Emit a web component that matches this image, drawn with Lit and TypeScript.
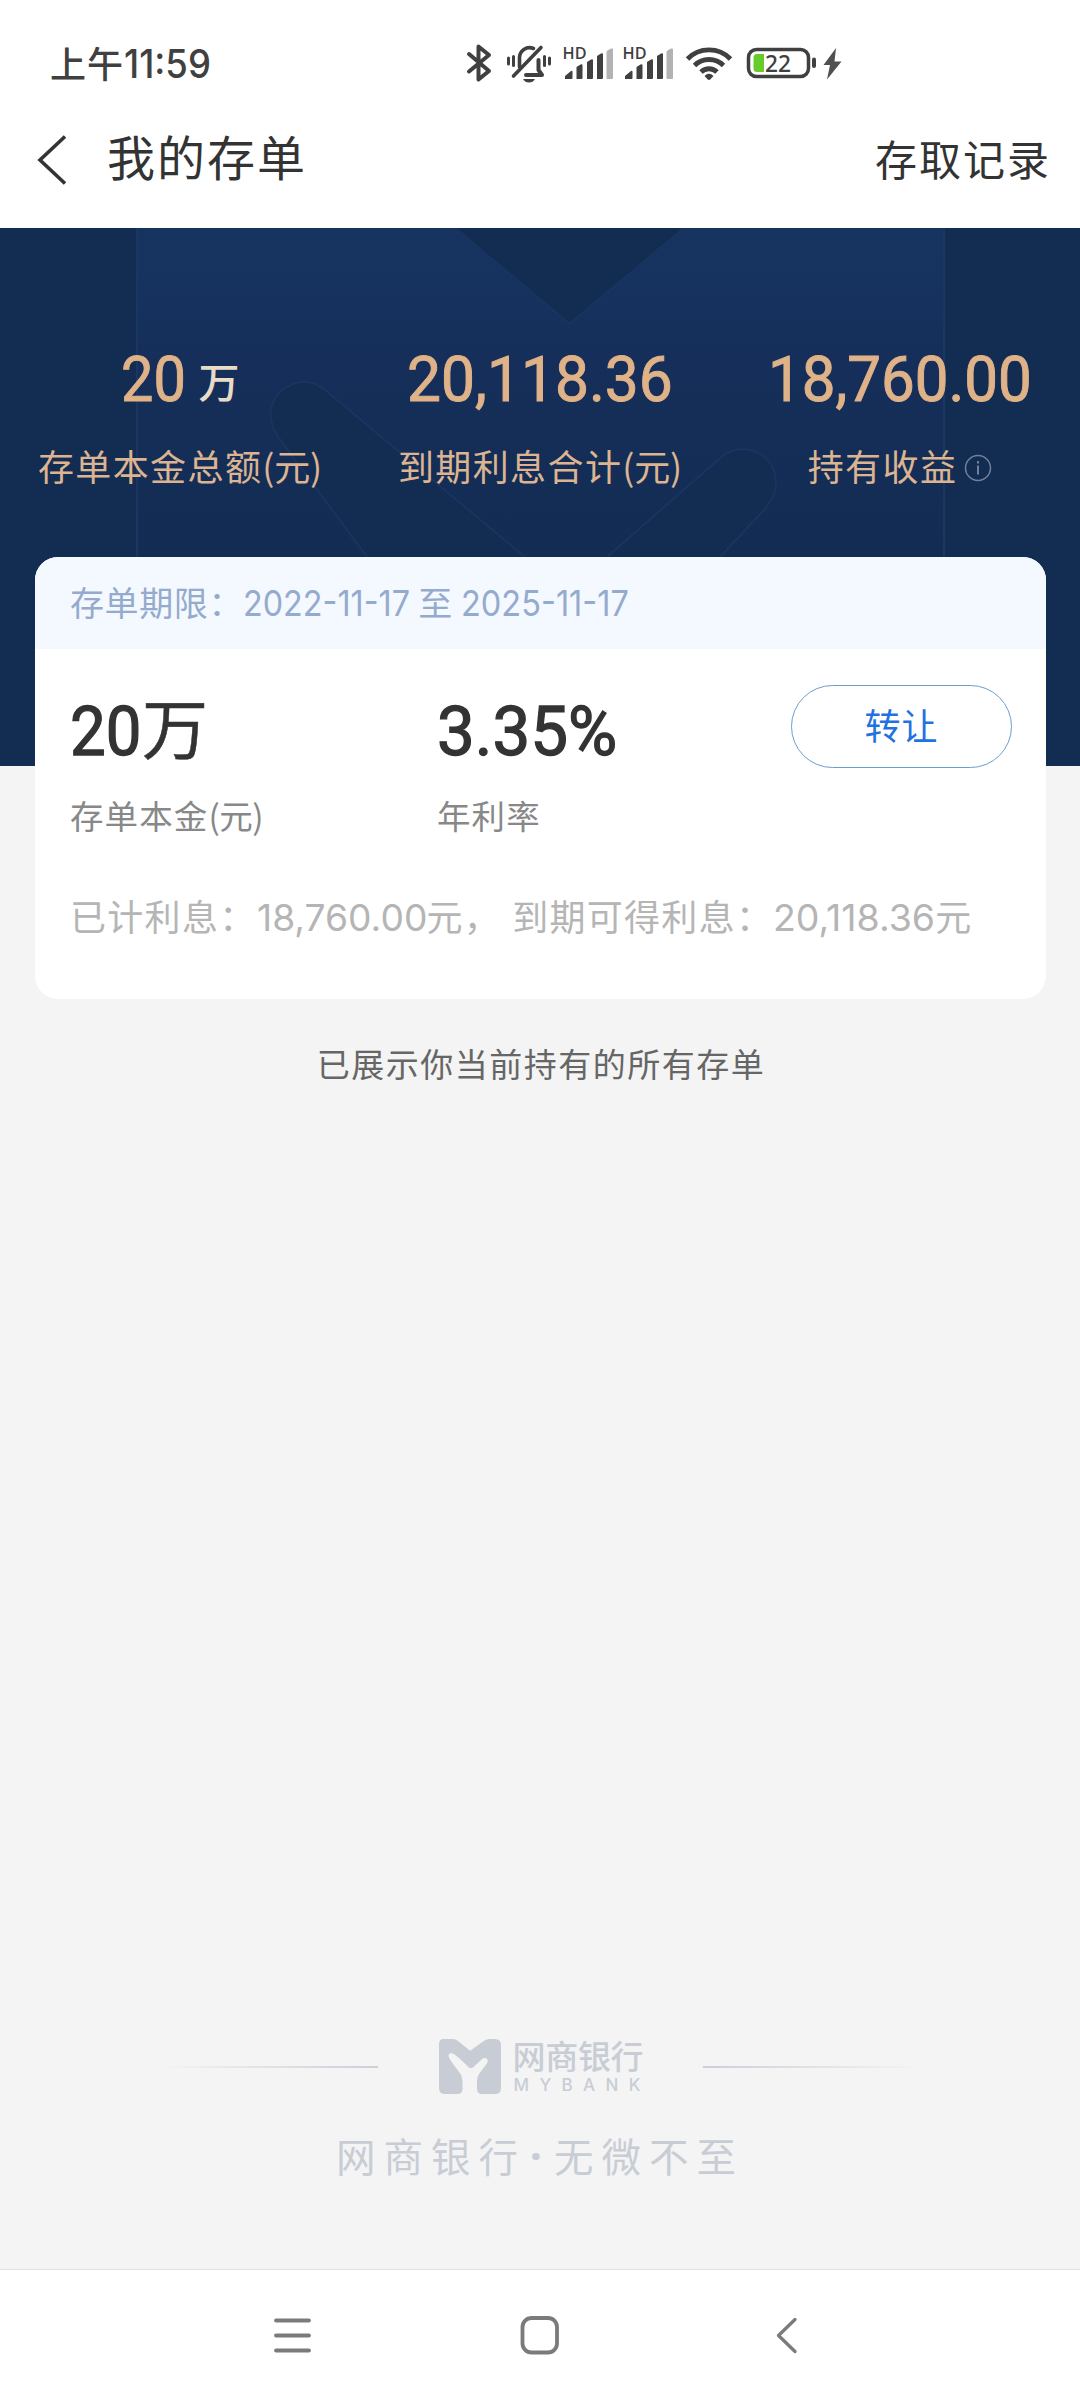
import { LitElement, html, css } from "lit";
import { customElement, property } from "lit/decorators.js";

/** A run of latin text, squeezed or stretched horizontally to a given width. */
@customElement("fit-text")
class FitText extends LitElement {
  static styles = css`
    :host { display: inline-block; line-height: 1; white-space: nowrap; letter-spacing: 0; }
    .run { display: inline-block; transform-origin: 0 50%; }
  `;
  @property({ type: Number }) w = 0;
  @property() text = "";
  render() {
    return html`<span class="run">${this.text}</span>`;
  }
  updated() {
    const run = this.renderRoot.querySelector(".run") as HTMLElement;
    this.style.width = `${this.w}px`;
    run.style.marginRight = `${this.w - run.offsetWidth}px`;
    run.style.transform = `scaleX(${this.w / run.offsetWidth})`;
  }
}

@customElement("status-bar")
class StatusBar extends LitElement {
  static styles = css`
    :host { display: flex; align-items: center; height: 90px; box-sizing: border-box; padding: 36px 0 0 50px; color: #404040; }
    .time { width: 410px; margin-top: -3px; font-size: 36px; line-height: 50px; letter-spacing: 1px; font-weight: 500; white-space: nowrap; }
    .digits { font: 500 39px Inter, sans-serif; }
    svg { display: block; flex: none; }
    .hd { font: 600 15.5px "Open Sans", sans-serif; }
    .level { font: 500 23px "Noto Sans", sans-serif; }
  `;
  private signal() {
    return html`<svg width="60" height="48" viewBox="560 40 60 48">
      <text class="hd" x="562.5" y="60" textLength="24" lengthAdjust="spacingAndGlyphs" fill="#404040">HD</text>
      <path fill="#404040" d="M565 80v-3l6-5q1.500-1 1.500 1v6q0 1-1 1zM576.500 80v-12l4-2.500q2-1 2 1v12.500q0 1-1 1zM587 80V63l4-2.500q2-1 2 1V79q0 1-1 1zM597 80V57l4-2.500q2-1 2 1V79q0 1-1 1z"/>
      <path fill="#b3b3b3" d="M606.500 79V53q0-1 1-1.500l3.500-2q2-.5 2 1V79q0 1-1 1h-4.500q-1 0-1-1z"/>
    </svg>`;
  }
  render() {
    return html`
      <div class="time">上午<fit-text class="digits" text="11:59" w="87"></fit-text></div>
      <svg width="40" height="48" viewBox="460 40 40 48" fill="none" stroke="#404040" stroke-width="4" stroke-linecap="round" stroke-linejoin="round">
        <path d="M469 55l20 17-10.500 8.500v-33L489 56l-20 16.500"/>
      </svg>
      <svg width="60" height="48" viewBox="500 40 60 48" fill="none" stroke="#404040" stroke-width="3.600" stroke-linecap="round" stroke-linejoin="round">
        <path d="M519.500 68V59a10 10 0 0 1 14-9.500M513.500 77L541 48.500" />
        <path stroke-width="4" d="M526 76h16l-3.500-5V61"/>
        <path stroke-width="3" d="M508.500 59v6M513.500 57.500v9M544.500 57.500v9M549.500 59v6"/>
        <path fill="#404040" stroke="none" d="M523 80h12q-2 3.500-6 3.500t-6-3.500z"/>
      </svg>
      ${this.signal()}${this.signal()}
      <svg width="60" height="48" viewBox="680 40 60 48" fill="none" stroke="#404040" stroke-width="4.800">
        <path d="M687.500 60a30 30 0 0 1 43 0M694.500 66.500a20.500 20.500 0 0 1 29 0M701 73a11.500 11.500 0 0 1 16 0"/>
        <path fill="#404040" stroke="none" d="M704.500 77q4.500-4.500 9 0l-3 3.300q-1.500 1.400-3 0z"/>
      </svg>
      <svg width="110" height="48" viewBox="740 40 110 48">
        <rect x="748.500" y="50.500" width="60" height="27" rx="8" fill="none" stroke="#404040" stroke-width="3.500"/>
        <rect x="812" y="58.500" width="4" height="10.500" rx="2" fill="#404040"/>
        <path fill="#67cb2c" d="M757 55h7v18h-7q-3.500 0-3.500-3.500v-11q0-3.500 3.500-3.500z"/>
        <text class="level" x="765" y="73" textLength="26" lengthAdjust="spacingAndGlyphs" fill="#404040">22</text>
        <path fill="#505050" d="M836 49l-12.500 17h6.500l-3 14.500 14.500-18h-7z"/>
      </svg>
    `;
  }
}

@customElement("title-bar")
class TitleBar extends LitElement {
  static styles = css`
    :host { display: flex; align-items: center; height: 138px; box-sizing: border-box; padding: 0 29px 0 36px; color: #333; }
    svg { display: block; margin-top: 2px; }
    .title { flex: 1; margin: -9px 0 0 39px; font-size: 48px; letter-spacing: 2px; }
    .link { font-size: 42px; letter-spacing: 2px; margin-top: -3px; }
  `;
  render() {
    return html`
      <svg width="32" height="52" viewBox="36 134 32 52" fill="none" stroke="#333" stroke-width="3.600"><path d="M65 136.500L40 160l25 23.500"/></svg>
      <div class="title">我的存单</div>
      <div class="link">存取记录</div>
    `;
  }
}

@customElement("summary-banner")
class SummaryBanner extends LitElement {
  static styles = css`
    :host { display: block; position: relative; height: 538px; background: #132c52; }
    .art { position: absolute; left: 0; top: 0; }
    .cols { position: relative; display: grid; grid-template-columns: 360px 360px 360px; padding-top: 115px; text-align: center; color: #dfb288; }
    .num { height: 70px; line-height: 70px; white-space: nowrap; }
    .din { font: 400 63px Roboto, sans-serif; -webkit-text-stroke: 1px currentColor; }
    .unit { position: relative; top: -3px; font-size: 41px; color: #e8dbc8; margin-left: 13px; font-weight: 500; }
    .label { display: flex; justify-content: center; align-items: center; height: 54px; margin-top: 25px; font-size: 36px; letter-spacing: 1.400px; white-space: nowrap; color: #dcb491; }
    .tight { letter-spacing: -.200px; }
    .info { margin: 5px 0 0 7px; }
  `;
  render() {
    return html`
      <svg class="art" width="1080" height="330" viewBox="0 228 1080 330">
        <defs>
          <linearGradient id="panel" x1="0" y1="0" x2="0" y2="1"><stop offset="0" stop-color="#173461"/><stop offset=".4" stop-color="#152f5a"/><stop offset="1" stop-color="#132c53"/></linearGradient>
        </defs>
        <rect x="137" y="220" width="807" height="350" fill="url(#panel)" stroke="#1a3761" stroke-width="2"/>
        <g fill="#132c52" stroke="#183560" stroke-width="2">
          <path d="M454 227L569.500 324 685 227"/>
          <path d="M367 557L279 438C258 407 281 382 305 382Q315 382 325 390L525 557"/>
          <path d="M607 557L719 459Q730 449 742 449C765 450 776 466 776 484Q776 496 763 511L720 557"/>
        </g>
      </svg>
      <div class="cols">
        <div><div class="num"><fit-text class="din" text="20" w="65"></fit-text><span class="unit">万</span></div><div class="label">存单本金总额<span class="tight">(元)</span></div></div>
        <div><div class="num"><fit-text class="din" text="20,118.36" w="266"></fit-text></div><div class="label">到期利息合计<span class="tight">(元)</span></div></div>
        <div><div class="num"><fit-text class="din" text="18,760.00" w="264"></fit-text></div>
          <div class="label">持有收益
            <svg class="info" width="28" height="28" viewBox="0 0 28 28"><circle cx="14" cy="14" r="12.500" fill="none" stroke="#71809a" stroke-width="1.500"/><path d="M14 11.500v9M14 7v2.500" stroke="#71809a" stroke-width="2"/></svg>
          </div></div>
      </div>
    `;
  }
}

@customElement("deposit-card")
class DepositCard extends LitElement {
  static styles = css`
    :host { display: block; position: relative; height: 442px; margin: -209px 34px 0 35px; border-radius: 23px; background: #fff; overflow: hidden; color: #333; }
    .period { display: flex; align-items: baseline; height: 92px; line-height: 90px; padding-left: 35px; background: #f4f8ff; color: #94abcd; font-size: 34px; letter-spacing: .600px; white-space: pre; }
    .period fit-text { font: 400 36px Inter, sans-serif; }
    .main { display: grid; grid-template-columns: 367px 354px 221px; padding: 36px 0 0 35px; }
    .num { height: 88px; line-height: 83px; font-size: 66px; white-space: nowrap; }
    .din { font: 400 68px Roboto, sans-serif; -webkit-text-stroke: 1.300px currentColor; }
    .wan { position: relative; top: -1px; -webkit-text-stroke: .500px currentColor; margin-left: 1px; }
    .label { height: 50px; line-height: 50px; margin-top: 17px; font-size: 33.500px; letter-spacing: 1.100px; color: #888; }
    .tight { letter-spacing: -.500px; }
    .btn { height: 83px; box-sizing: border-box; line-height: 76px; border: 1.500px solid #6c9dcf; border-radius: 42px; text-align: center; font-size: 36px; letter-spacing: 1px; color: #1f72e0; }
    .earned { display: flex; align-items: baseline; height: 60px; line-height: 62px; margin-top: 44px; padding-left: 35px; font-size: 36px; letter-spacing: 1.300px; color: #b5b5b5; white-space: nowrap; }
    .earned fit-text { font: 400 37px Inter, sans-serif; }
    .gap { margin-left: 11px; }
  `;
  render() {
    return html`
      <div class="period">存单期限：<fit-text text="2022-11-17" w="167"></fit-text><span> 至 </span><fit-text text="2025-11-17" w="168"></fit-text></div>
      <div class="main">
        <div><div class="num"><fit-text class="din" text="20" w="71"></fit-text><span class="wan">万</span></div><div class="label">存单本金<span class="tight">(元)</span></div></div>
        <div><div class="num"><fit-text class="din" text="3.35%" w="180"></fit-text></div><div class="label">年利率</div></div>
        <div class="btn">转让</div>
      </div>
      <div class="earned">已计利息：<fit-text text="18,760.00" w="170"></fit-text>元，<span class="gap">到期可得利息：</span><fit-text text="20,118.36" w="162"></fit-text>元</div>
    `;
  }
}

@customElement("brand-footer")
class BrandFooter extends LitElement {
  static styles = css`
    :host { display: flex; flex-direction: column; align-items: center; color: #c8cdd5; }
    .row { display: flex; align-items: center; height: 60px; }
    .line { width: 220px; height: 2px; background: linear-gradient(90deg, #f4f4f4, #cbd0d8); }
    .line.right { transform: scaleX(-1); }
    .mark { margin: 0 12px 0 61px; }
    .names { width: 130px; margin-right: 60px; }
    .cn { font-size: 33px; line-height: 36px; margin-top: -4px; letter-spacing: -.300px; font-weight: 500; white-space: nowrap; }
    .en { display: flex; justify-content: space-between; font: 500 17px/18px Inter, sans-serif; padding: 3px 2px 0 1px; }
    .slogan { margin-top: 25px; height: 66px; line-height: 66px; font-size: 39.500px; letter-spacing: 8px; white-space: nowrap; display: flex; }
    .dot { width: 28px; letter-spacing: 0; font-family: "Noto Sans", sans-serif; font-weight: 800; text-align: center; margin-left: -4px; margin-right: 4px; }
  `;
  render() {
    return html`
      <div class="row">
        <div class="line"></div>
        <svg class="mark" width="62" height="56" viewBox="439 2039 62 56">
          <path fill="#c8cdd5" d="M445 2039h8q2.500 0 5 2l13 10.500-9.500 8.500-7-5.500q-5-3.500-6 1 0 2 2.500 5.500l9.500 13q2 3 2 7v8q0 5-5 5h-12.500q-6 0-6-6v-43.500q0-6 6-6z"/>
          <path fill="#c8cdd5" d="M495 2039q6 0 6 6v43q0 6-6 6h-13q-5 0-5-5v-8q0-4 2-7l7.500-10q2.500-4 0-5.500-2.500-1.500-5 1l-8.500 8q-2 1.500-4 0l-9.500-9L483 2041.500q3-2.500 6-2.500z"/>
        </svg>
        <div class="names"><div class="cn">网商银行</div><div class="en">${[..."MYBANK"].map((c) => html`<span>${c}</span>`)}</div></div>
        <div class="line right"></div>
      </div>
      <div class="slogan"><span>网商银行</span><span class="dot">·</span><span>无微不至</span></div>
    `;
  }
}

@customElement("system-nav")
class SystemNav extends LitElement {
  static styles = css`
    :host { display: flex; align-items: center; height: 131px; box-sizing: border-box; border-top: 1px solid #e2e2e2; background: #fff; padding-left: 272px; }
    svg { display: block; fill: none; stroke: #7b7b7b; stroke-width: 3.800; stroke-linecap: round; stroke-linejoin: round; margin-right: 205px; }
  `;
  render() {
    return html`
      <svg width="42" height="42" viewBox="272 2314 42 42"><path d="M276 2320.500h33M276 2335.500h33M276 2350.500h33"/></svg>
      <svg width="42" height="42" viewBox="519 2314 42 42"><rect x="522.500" y="2318" width="34.500" height="34.500" rx="9"/></svg>
      <svg width="42" height="42" viewBox="766 2314 42 42"><path stroke-width="3.300" d="M795 2319.500L778.500 2335.500 795 2351.500"/></svg>
    `;
  }
}

@customElement("app-root")
class AppRoot extends LitElement {
  static styles = css`
    :host { display: flex; flex-direction: column; width: 1080px; height: 2400px; overflow: hidden; background: #fff; font-family: "Noto Sans CJK SC", sans-serif; }
    .page { flex: 1; display: flex; flex-direction: column; background: #f4f4f4; }
    .note { margin-top: 39px; height: 50px; line-height: 50px; padding-left: 2px; text-align: center; font-size: 33px; letter-spacing: 1.500px; color: #666; }
    .foot { margin-top: auto; padding-bottom: 81px; }
  `;
  render() {
    return html`
      <status-bar></status-bar>
      <title-bar></title-bar>
      <div class="page">
        <summary-banner></summary-banner>
        <deposit-card></deposit-card>
        <div class="note">已展示你当前持有的所有存单</div>
        <brand-footer class="foot"></brand-footer>
      </div>
      <system-nav></system-nav>
    `;
  }
}
